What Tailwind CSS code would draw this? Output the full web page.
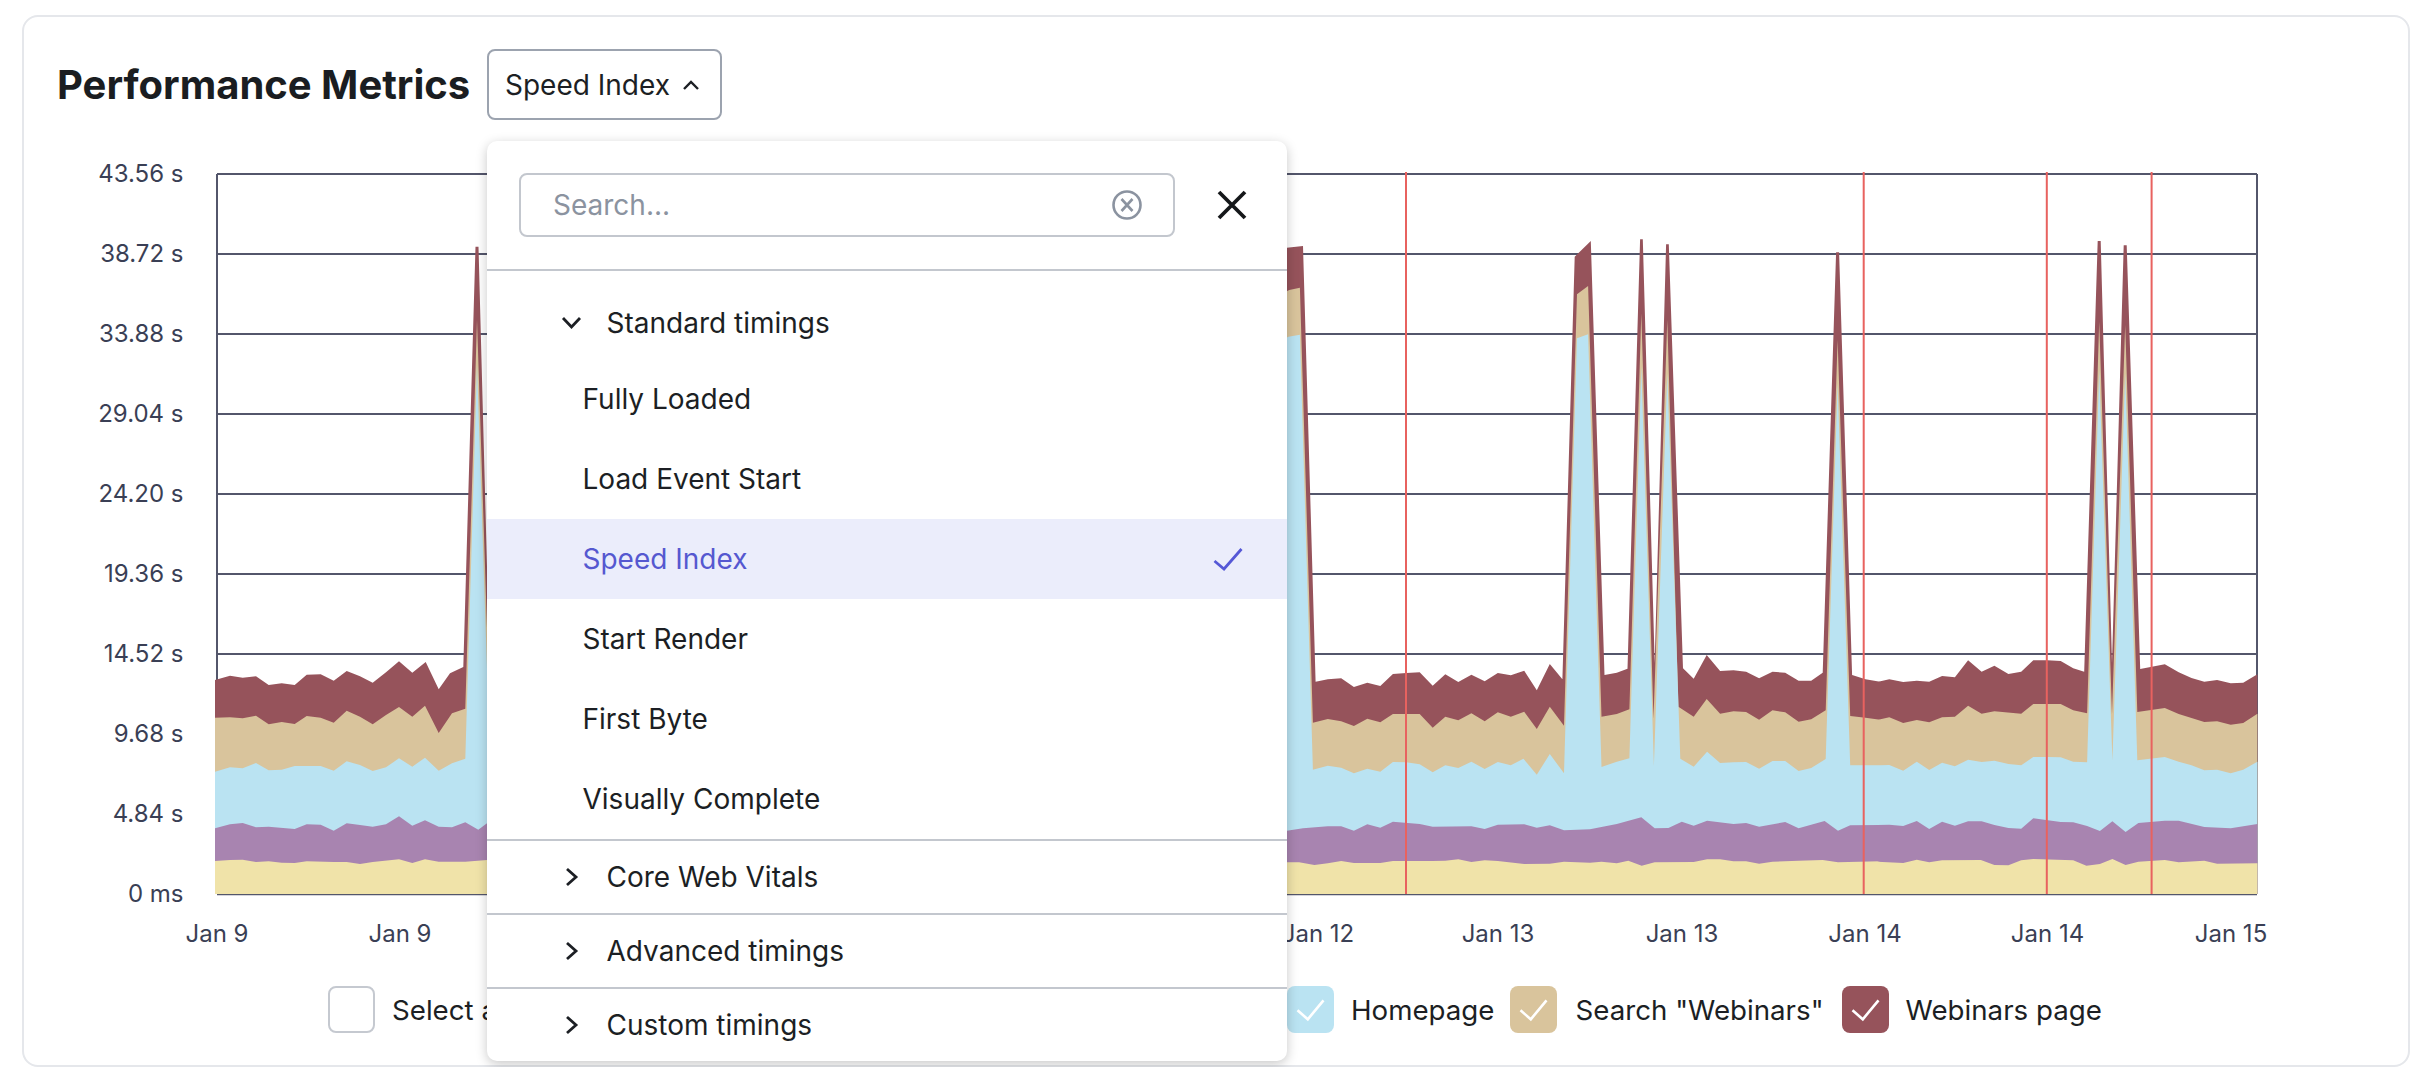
<!doctype html>
<html>
<head>
<meta charset="utf-8">
<script src="https://cdn.jsdelivr.net/npm/@tailwindcss/browser@4"></script>
</head>
<body class="bg-white font-['Inter',sans-serif] text-[#1c1f24]">
<div class="pt-[15px] px-[22px]">
  <div class="relative w-[2388px] h-[1052px] border-2 border-[#e5e7eb] rounded-[16px]">
    <div class="flex items-center gap-[18px] pl-[33px] pt-[32px]">
      <h1 class="w-[412px] whitespace-nowrap text-[40px] leading-[48px] font-bold text-[#1a1d21]">Performance Metrics</h1>
      <button class="flex items-center h-[71px] w-[235px] pl-[16px] border-2 border-[#9ca3af] rounded-[8px] bg-white text-[28px]">
        <span>Speed Index</span>
        <svg class="ml-[12px] w-[18px] h-[12px]" viewBox="0 0 18 12" fill="none" stroke="#1c1f24" stroke-width="2.4"><path d="M2 10 L9 3 L16 10"/></svg>
      </button>
    </div>

    <svg class="block w-[2384px] h-[850px] font-['Inter',sans-serif]" viewBox="24 120 2384 850">
      <g class="stroke-[#53566b] [stroke-width:2px]">
        <path d="M217 174H2257M217 254H2257M217 334H2257M217 414H2257M217 494H2257M217 574H2257M217 654H2257M217 734H2257M217 814H2257M217 174V894M2257 174V894M217 894.3H2257" fill="none"/>
      </g>
      <polygon id="l-maroon" class="fill-[#96535b]"/>
      <polygon id="l-tan" class="fill-[#d9c49c]"/>
      <polygon id="l-blue" class="fill-[#bae3f2]"/>
      <polygon id="l-purple" class="fill-[#a884b0]"/>
      <polygon id="l-yellow" class="fill-[#f0e3a9]"/>
      <path class="stroke-[#e8625f] [stroke-width:2px]" fill="none" d="M1406 172V894M1863.7 172V894M2046.8 172V894M2151.6 172V894"/>
      <g class="fill-[#3a3f55] text-[24px]" text-anchor="end">
        <text x="183.5" y="181.7">43.56 s</text>
        <text x="183.5" y="261.7">38.72 s</text>
        <text x="183.5" y="341.7">33.88 s</text>
        <text x="183.5" y="421.7">29.04 s</text>
        <text x="183.5" y="501.7">24.20 s</text>
        <text x="183.5" y="581.7">19.36 s</text>
        <text x="183.5" y="661.7">14.52 s</text>
        <text x="183.5" y="741.7">9.68 s</text>
        <text x="183.5" y="821.7">4.84 s</text>
        <text x="183.5" y="901.7">0 ms</text>
      </g>
      <g class="fill-[#3a3f55] text-[24px]" text-anchor="middle">
        <text x="217" y="941.5">Jan 9</text>
        <text x="400" y="941.5">Jan 9</text>
        <text x="1318" y="941.5">Jan 12</text>
        <text x="1498" y="941.5">Jan 13</text>
        <text x="1682" y="941.5">Jan 13</text>
        <text x="1865" y="941.5">Jan 14</text>
        <text x="2047.5" y="941.5">Jan 14</text>
        <text x="2231" y="941.5">Jan 15</text>
      </g>
    </svg>

    <div class="flex items-center h-[47px] mt-[16px] pl-[304px] text-[27.7px]">
      <div class="flex items-center w-[959px]">
        <span class="w-[47px] h-[47px] border-2 border-[#c5c9d0] rounded-[8px]"></span>
        <span class="ml-[17px] pt-[2px]">Select all</span>
      </div>
      <div class="flex items-center">
        <div class="flex items-center gap-[17px]">
          <span class="w-[47px] h-[47px] rounded-[8px] bg-[#bae3f2]"><svg viewBox="0 0 47 47" class="w-[47px] h-[47px]" fill="none" stroke="#fff" stroke-width="2.6"><path d="M10.5 24.3 L20.8 33.3 L36.5 14.3"/></svg></span>
          <span class="pt-[2px]">Homepage</span>
        </div>
        <div class="ml-[16px] flex items-center gap-[18px]">
          <span class="w-[47px] h-[47px] rounded-[8px] bg-[#d9c49c]"><svg viewBox="0 0 47 47" class="w-[47px] h-[47px]" fill="none" stroke="#fff" stroke-width="2.6"><path d="M10.5 24.3 L20.8 33.3 L36.5 14.3"/></svg></span>
          <span class="pt-[2px]">Search "Webinars"</span>
        </div>
        <div class="ml-[18px] flex items-center gap-[17px]">
          <span class="w-[47px] h-[47px] rounded-[8px] bg-[#96535b]"><svg viewBox="0 0 47 47" class="w-[47px] h-[47px]" fill="none" stroke="#fff" stroke-width="2.6"><path d="M10.5 24.3 L20.8 33.3 L36.5 14.3"/></svg></span>
          <span class="pt-[2px]">Webinars page</span>
        </div>
      </div>
    </div>

    <div class="absolute left-[463px] top-[124px] w-[800px] h-[920px] bg-white rounded-[10px] shadow-[0_3px_12px_rgba(0,0,0,0.22)] text-[28px] text-[#1c1f24]">
      <div class="flex items-center h-[130px] pl-[32px] border-b-2 border-[#c3c7ce]">
        <div class="flex items-center justify-between w-[656px] h-[64px] pl-[32px] pr-[31.5px] border-2 border-[#c3c7ce] rounded-[8px]">
          <span class="text-[#8b93a0]">Search...</span>
          <svg class="w-[30px] h-[30px]" viewBox="0 0 30 30" fill="none" stroke="#8b93a0" stroke-width="2.6"><circle cx="15" cy="15" r="13.5"/><path d="M9.5 9 L20.5 21 M20.5 9 L9.5 21"/></svg>
        </div>
        <svg class="ml-[42px] w-[30px] h-[30px]" viewBox="0 0 30 30" fill="none" stroke="#15171a" stroke-width="3.8"><path d="M2 2 L28 28 M28 2 L2 28"/></svg>
      </div>
      <div class="flex items-center h-[72px] mt-[16px] pl-[72px]">
        <svg class="w-[25px] h-[14px]" viewBox="0 0 25 14" fill="none" stroke="#1c1f24" stroke-width="2.8"><path d="M4 2 L12.5 11 L21 2"/></svg>
        <span class="ml-[22.5px]">Standard timings</span>
      </div>
      <div class="flex items-center h-[80px] pl-[95.5px]">Fully Loaded</div>
      <div class="flex items-center h-[80px] pl-[95.5px]">Load Event Start</div>
      <div class="flex items-center justify-between h-[80px] pl-[95.5px] pr-[44px] bg-[#ebedfb] text-[#5558d0]">
        <span>Speed Index</span>
        <svg class="w-[30px] h-[24px]" viewBox="0 0 30 24" fill="none" stroke="#5558d6" stroke-width="2.8"><path d="M1.5 14 L11 22 L28.5 2"/></svg>
      </div>
      <div class="flex items-center h-[80px] pl-[95.5px]">Start Render</div>
      <div class="flex items-center h-[80px] pl-[95.5px]">First Byte</div>
      <div class="flex items-center h-[80px] pl-[95.5px]">Visually Complete</div>
      <div class="flex items-center h-[74px] pl-[72px] border-t-2 border-[#c3c7ce]">
        <svg class="w-[25px] h-[20px]" viewBox="0 0 25 20" fill="none" stroke="#1c1f24" stroke-width="2.8"><path d="M8 2 L17 10 L8 18"/></svg>
        <span class="ml-[22.5px]">Core Web Vitals</span>
      </div>
      <div class="flex items-center h-[74px] pl-[72px] border-t-2 border-[#c3c7ce]">
        <svg class="w-[25px] h-[20px]" viewBox="0 0 25 20" fill="none" stroke="#1c1f24" stroke-width="2.8"><path d="M8 2 L17 10 L8 18"/></svg>
        <span class="ml-[22.5px]">Advanced timings</span>
      </div>
      <div class="flex items-center h-[74px] pl-[72px] border-t-2 border-[#c3c7ce]">
        <svg class="w-[25px] h-[20px]" viewBox="0 0 25 20" fill="none" stroke="#1c1f24" stroke-width="2.8"><path d="M8 2 L17 10 L8 18"/></svg>
        <span class="ml-[22.5px]">Custom timings</span>
      </div>
    </div>
  </div>
</div>
<script>
var z4=function(p){return [p[0]/3,600+p[1]/3]};
var z5=function(p){return [1280+p[0]/2.613,140+p[1]/3]};
var z6=function(p){return [1280+p[0]/2.613,620+p[1]/3]};
var z7=function(p){return [1860+p[0]/2.73,140+p[1]/3]};
var z8=function(p){return [1860+p[0]/2.73,620+p[1]/3]};
var raw=function(p){return p};
var layers={
 'l-maroon':[
  [z4,[[645,240],[690,227],[728,233],[768,229],[806,255],[845,250],[884,255],[920,224],[962,223],[1001,242],[1040,213],[1080,229],[1118,248],[1158,217],[1197,184],[1237,218],[1277,186],[1316,268],[1350,220],[1390,201]]],
  [raw,[[475.5,246.7],[478.5,246.7],[490,680]]],
  [z5,[[18,323],[60,318]]],
  [z6,[[93,185],[125,178],[160,175],[193,201],[228,188],[262,198],[295,162],[330,159],[365,157],[399,197],[432,163],[466,186],[500,164],[535,184],[569,159],[603,166],[638,152],[671,211],[705,132],[738,178]]],
  [z5,[[770,350],[812,303]]],
  [z6,[[848,165],[880,158],[908,146]]],
  [z5,[[941,298],[948,298]]],
  [z6,[[979,130]]],
  [z5,[[1009,313],[1016,313]]],
  [z6,[[1053,145],[1081,176],[1115,105],[1150,153],[1185,151],[1218,155],[1252,175],[1287,155],[1320,158],[1355,182],[1388,182],[1418,158]]],
  [z5,[[1453,337],[1461,337]]],
  [z6,[[1495,165],[1530,178],[1568,185]]],
  [z8,[[47,186],[80,178],[118,186],[155,182],[189,185],[224,168],[259,172],[295,121],[332,155],[367,137],[405,162],[440,155],[473,121],[512,121],[548,123],[582,145],[612,155]]],
  [z7,[[649,303],[657,303]]],
  [z8,[[688,130]]],
  [z7,[[720,316],[728,316]]],
  [z8,[[765,147],[832,133],[870,157],[905,174],[940,185],[975,180],[1012,190],[1046,188],[1085,163]]]
 ],
 'l-tan':[
  [z4,[[645,353],[690,352],[728,355],[768,347],[806,373],[845,366],[884,372],[920,348],[962,353],[1001,368],[1040,332],[1080,350],[1118,373],[1158,345],[1197,321],[1237,350],[1275,317],[1316,399],[1356,340],[1396,326]]],
  [raw,[[477,320],[490,720]]],
  [z5,[[24,450],[52,443]]],
  [z6,[[86,308],[125,297],[160,304],[193,318],[228,296],[262,307],[295,282],[365,282],[399,323],[432,290],[466,301],[500,280],[535,304],[569,277],[603,290],[638,275],[671,327],[705,260],[742,317]]],
  [z5,[[776,463],[805,438]]],
  [z6,[[840,290],[880,282],[913,268]]],
  [z5,[[944,520]]],
  [z6,[[976,296]]],
  [z5,[[1012,540]]],
  [z6,[[1041,260],[1081,290],[1115,237],[1150,281],[1185,274],[1218,276],[1252,299],[1287,271],[1320,277],[1355,305],[1388,298],[1426,271]]],
  [z5,[[1457,600]]],
  [z6,[[1490,288],[1530,293],[1568,299]]],
  [z8,[[47,300],[80,292],[118,309],[155,300],[189,307],[224,292],[259,290],[295,257],[332,281],[367,274],[440,281],[473,252],[548,252],[582,271],[620,280]]],
  [z7,[[653,545]]],
  [z8,[[688,283]]],
  [z7,[[724,555]]],
  [z8,[[757,276],[832,264],[870,282],[940,306],[975,304],[1012,314],[1046,309],[1085,281]]]
 ],
 'l-blue':[
  [z4,[[645,515],[690,502],[728,505],[768,489],[806,511],[845,509],[884,498],[962,498],[1001,512],[1040,484],[1080,495],[1118,513],[1158,502],[1197,475],[1237,500],[1275,473],[1316,512],[1356,490],[1396,476]]],
  [raw,[[477,365],[490,760]]],
  [z5,[[22,590],[52,584]]],
  [z6,[[86,449],[125,437],[160,443],[193,460],[228,446],[262,455],[295,426],[330,427],[365,433],[399,457],[432,436],[466,444],[500,425],[535,447],[569,426],[603,436],[636,416],[671,464],[705,402],[742,460]]],
  [z5,[[776,595],[805,583]]],
  [z6,[[840,441],[880,425],[913,415]]],
  [z5,[[944,680]]],
  [z6,[[977,438]]],
  [z5,[[1012,700]]],
  [z6,[[1046,416],[1081,440],[1116,395],[1150,429],[1185,427],[1218,426],[1252,446],[1287,423],[1320,423],[1355,453],[1388,444],[1426,417]]],
  [z5,[[1457,730]]],
  [z6,[[1490,436],[1568,436]]],
  [z8,[[80,435],[118,452],[155,425],[189,450],[224,428],[259,439],[295,419],[332,426],[367,422],[405,432],[440,436],[473,411],[512,411],[548,412],[582,425],[620,427]]],
  [z7,[[653,690]]],
  [z8,[[689,422]]],
  [z7,[[724,700]]],
  [z8,[[757,421],[832,411],[870,425],[905,436],[940,451],[975,449],[1012,460],[1046,449],[1085,425]]]
 ],
 'l-purple':[
  [z4,[[645,685],[690,673],[728,669],[768,682],[806,680],[884,687],[920,673],[962,674],[1001,692],[1040,670],[1080,675],[1118,680],[1158,673],[1197,649],[1237,677],[1275,661],[1316,680],[1356,682],[1396,667],[1435,689],[1461,670]]],
  [z6,[[18,632],[60,625],[125,619],[160,619],[193,632],[228,613],[262,623],[295,605],[365,612],[399,620],[500,619],[535,627],[569,614],[638,613],[671,623],[705,616],[742,631],[810,628],[880,612],[944,592],[979,625],[1015,624],[1050,605],[1081,617],[1116,602],[1185,612],[1218,609],[1252,620],[1320,606],[1355,625],[1423,603],[1458,632],[1490,616],[1568,615]]],
  [z8,[[47,615],[80,614],[118,618],[155,603],[189,627],[224,605],[259,617],[295,604],[332,604],[367,615],[405,624],[440,626],[473,595],[548,606],[582,607],[620,618],[655,633],[689,604],[725,636],[760,609],[832,602],[870,602],[940,621],[1012,625],[1085,612]]]
 ],
 'l-yellow':[
  [z4,[[645,783],[690,780],[728,779],[768,786],[806,784],[845,788],[884,789],[920,784],[1001,786],[1040,786],[1080,792],[1118,786],[1197,778],[1237,789],[1275,778],[1316,785],[1396,785],[1461,780]]],
  [z6,[[18,727],[50,727],[90,735],[125,730],[160,723],[193,729],[262,729],[295,723],[399,723],[432,722],[466,718],[500,726],[535,721],[569,723],[638,732],[705,731],[742,725],[810,728],[840,725],[880,730],[910,722],[945,737],[979,727],[1081,726],[1116,718],[1150,718],[1185,724],[1218,724],[1252,731],[1287,725],[1355,722],[1418,720],[1458,727],[1568,724]]],
  [z8,[[47,725],[118,729],[155,719],[189,727],[224,721],[330,720],[367,735],[405,736],[440,721],[473,717],[582,721],[618,737],[655,732],[689,717],[725,735],[760,725],[832,720],[870,727],[940,722],[975,731],[1085,730]]]
 ]
};
Object.keys(layers).forEach(function(id){
  var pts=[];
  layers[id].forEach(function(seg){seg[1].forEach(function(p){pts.push(seg[0](p))})});
  var last=pts[pts.length-1], first=pts[0];
  pts.push([last[0],894]);pts.push([first[0],894]);
  document.getElementById(id).setAttribute('points',pts.map(function(p){return p[0].toFixed(1)+','+p[1].toFixed(1)}).join(' '));
});
</script>
</body>
</html>
